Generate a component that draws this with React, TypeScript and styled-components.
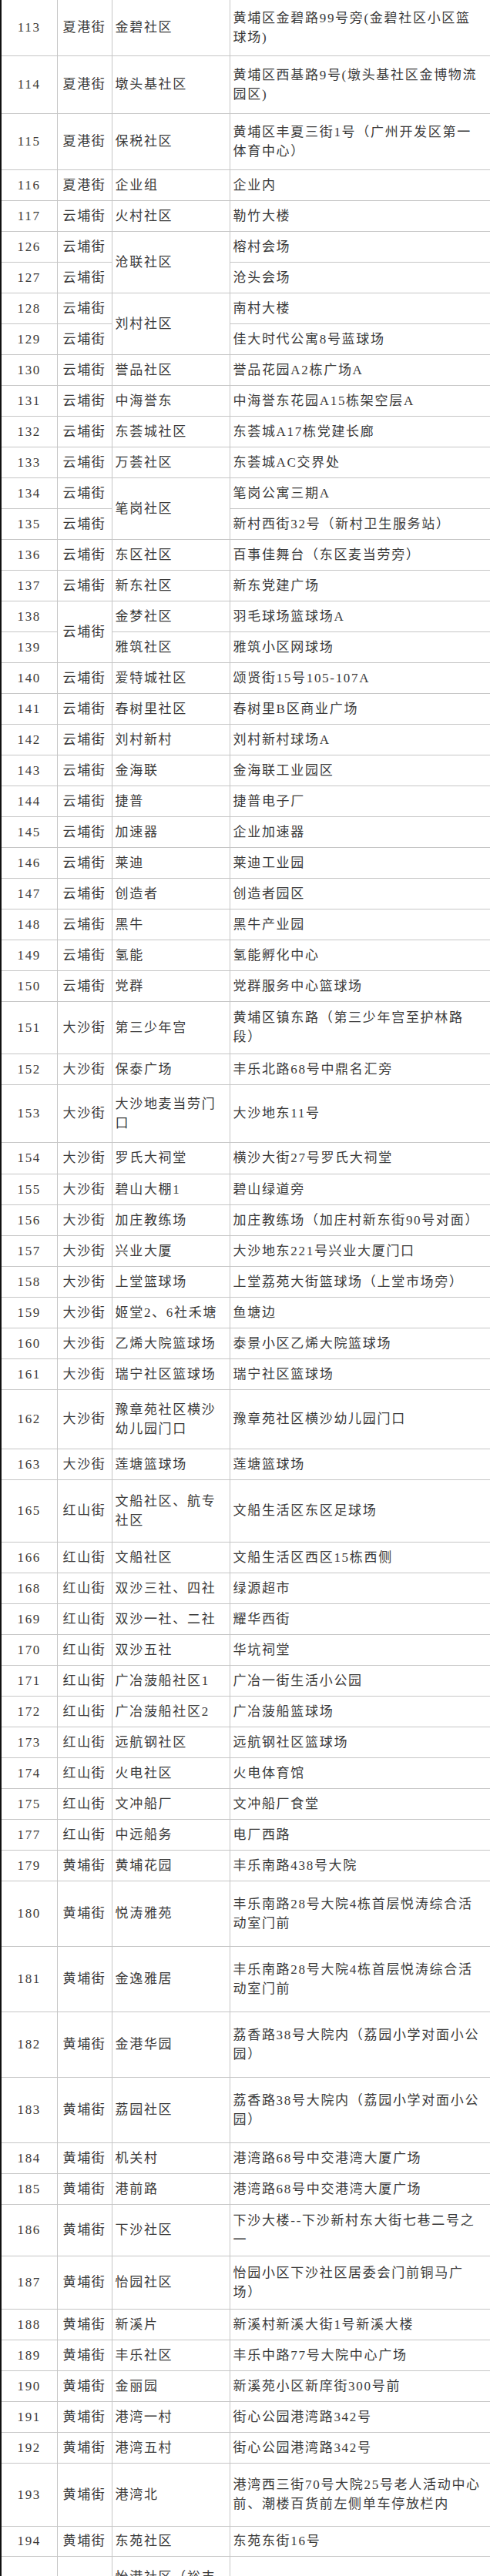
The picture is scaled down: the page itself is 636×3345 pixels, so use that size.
import React from "react";
import styled, { createGlobalStyle } from "styled-components";

const GlobalStyle = createGlobalStyle`
  html, body {
    margin: 0;
    padding: 0;
    background: #ffffff;
  }
`;

interface Row {
  n: number;
  s: string | null;
  ss?: number;
  c: string[] | null;
  cs?: number;
  a: string[];
  h?: number;
}

const rows: Row[] = [
  { n: 113, s: "夏港街", c: ["金碧社区"], a: ["黄埔区金碧路99号旁(金碧社区小区篮", "球场)"], h: 72 },
  { n: 114, s: "夏港街", c: ["墩头基社区"], a: ["黄埔区西基路9号(墩头基社区金博物流", "园区)"], h: 75 },
  { n: 115, s: "夏港街", c: ["保税社区"], a: ["黄埔区丰夏三街1号（广州开发区第一", "体育中心）"], h: 73 },
  { n: 116, s: "夏港街", c: ["企业组"], a: ["企业内"] },
  { n: 117, s: "云埔街", c: ["火村社区"], a: ["勒竹大楼"] },
  { n: 126, s: "云埔街", c: ["沧联社区"], cs: 2, a: ["榕村会场"] },
  { n: 127, s: "云埔街", c: null, a: ["沧头会场"] },
  { n: 128, s: "云埔街", c: ["刘村社区"], cs: 2, a: ["南村大楼"] },
  { n: 129, s: "云埔街", c: null, a: ["佳大时代公寓8号蓝球场"] },
  { n: 130, s: "云埔街", c: ["誉品社区"], a: ["誉品花园A2栋广场A"] },
  { n: 131, s: "云埔街", c: ["中海誉东"], a: ["中海誉东花园A15栋架空层A"] },
  { n: 132, s: "云埔街", c: ["东荟城社区"], a: ["东荟城A17栋党建长廊"] },
  { n: 133, s: "云埔街", c: ["万荟社区"], a: ["东荟城AC交界处"] },
  { n: 134, s: "云埔街", c: ["笔岗社区"], cs: 2, a: ["笔岗公寓三期A"] },
  { n: 135, s: "云埔街", c: null, a: ["新村西街32号（新村卫生服务站）"] },
  { n: 136, s: "云埔街", c: ["东区社区"], a: ["百事佳舞台（东区麦当劳旁）"] },
  { n: 137, s: "云埔街", c: ["新东社区"], a: ["新东党建广场"] },
  { n: 138, s: "云埔街", ss: 2, c: ["金梦社区"], a: ["羽毛球场篮球场A"] },
  { n: 139, s: null, c: ["雅筑社区"], a: ["雅筑小区网球场"] },
  { n: 140, s: "云埔街", c: ["爱特城社区"], a: ["颂贤街15号105-107A"] },
  { n: 141, s: "云埔街", c: ["春树里社区"], a: ["春树里B区商业广场"] },
  { n: 142, s: "云埔街", c: ["刘村新村"], a: ["刘村新村球场A"] },
  { n: 143, s: "云埔街", c: ["金海联"], a: ["金海联工业园区"] },
  { n: 144, s: "云埔街", c: ["捷普"], a: ["捷普电子厂"] },
  { n: 145, s: "云埔街", c: ["加速器"], a: ["企业加速器"] },
  { n: 146, s: "云埔街", c: ["莱迪"], a: ["莱迪工业园"] },
  { n: 147, s: "云埔街", c: ["创造者"], a: ["创造者园区"] },
  { n: 148, s: "云埔街", c: ["黑牛"], a: ["黑牛产业园"] },
  { n: 149, s: "云埔街", c: ["氢能"], a: ["氢能孵化中心"] },
  { n: 150, s: "云埔街", c: ["党群"], a: ["党群服务中心篮球场"] },
  { n: 151, s: "大沙街", c: ["第三少年宫"], a: ["黄埔区镇东路（第三少年宫至护林路", "段）"], h: 68 },
  { n: 152, s: "大沙街", c: ["保泰广场"], a: ["丰乐北路68号中鼎名汇旁"] },
  { n: 153, s: "大沙街", c: ["大沙地麦当劳门", "口"], a: ["大沙地东11号"], h: 75 },
  { n: 154, s: "大沙街", c: ["罗氏大祠堂"], a: ["横沙大街27号罗氏大祠堂"], h: 41 },
  { n: 155, s: "大沙街", c: ["碧山大棚1"], a: ["碧山绿道旁"] },
  { n: 156, s: "大沙街", c: ["加庄教练场"], a: ["加庄教练场（加庄村新东街90号对面）"] },
  { n: 157, s: "大沙街", c: ["兴业大厦"], a: ["大沙地东221号兴业大厦门口"] },
  { n: 158, s: "大沙街", c: ["上堂篮球场"], a: ["上堂荔苑大街篮球场（上堂市场旁）"] },
  { n: 159, s: "大沙街", c: ["姬堂2、6社禾塘"], a: ["鱼塘边"] },
  { n: 160, s: "大沙街", c: ["乙烯大院篮球场"], a: ["泰景小区乙烯大院篮球场"] },
  { n: 161, s: "大沙街", c: ["瑞宁社区篮球场"], a: ["瑞宁社区篮球场"] },
  { n: 162, s: "大沙街", c: ["豫章苑社区横沙", "幼儿园门口"], a: ["豫章苑社区横沙幼儿园门口"], h: 77 },
  { n: 163, s: "大沙街", c: ["莲塘篮球场"], a: ["莲塘篮球场"] },
  { n: 165, s: "红山街", c: ["文船社区、航专", "社区"], a: ["文船生活区东区足球场"], h: 81 },
  { n: 166, s: "红山街", c: ["文船社区"], a: ["文船生活区西区15栋西侧"] },
  { n: 168, s: "红山街", c: ["双沙三社、四社"], a: ["绿源超市"] },
  { n: 169, s: "红山街", c: ["双沙一社、二社"], a: ["耀华西街"] },
  { n: 170, s: "红山街", c: ["双沙五社"], a: ["华坑祠堂"] },
  { n: 171, s: "红山街", c: ["广冶菠船社区1"], a: ["广冶一街生活小公园"] },
  { n: 172, s: "红山街", c: ["广冶菠船社区2"], a: ["广冶菠船篮球场"] },
  { n: 173, s: "红山街", c: ["远航钢社区"], a: ["远航钢社区篮球场"] },
  { n: 174, s: "红山街", c: ["火电社区"], a: ["火电体育馆"] },
  { n: 175, s: "红山街", c: ["文冲船厂"], a: ["文冲船厂食堂"] },
  { n: 177, s: "红山街", c: ["中远船务"], a: ["电厂西路"] },
  { n: 179, s: "黄埔街", c: ["黄埔花园"], a: ["丰乐南路438号大院"] },
  { n: 180, s: "黄埔街", c: ["悦涛雅苑"], a: ["丰乐南路28号大院4栋首层悦涛综合活", "动室门前"], h: 85 },
  { n: 181, s: "黄埔街", c: ["金逸雅居"], a: ["丰乐南路28号大院4栋首层悦涛综合活", "动室门前"], h: 85 },
  { n: 182, s: "黄埔街", c: ["金港华园"], a: ["荔香路38号大院内（荔园小学对面小公", "园）"], h: 85 },
  { n: 183, s: "黄埔街", c: ["荔园社区"], a: ["荔香路38号大院内（荔园小学对面小公", "园）"], h: 85 },
  { n: 184, s: "黄埔街", c: ["机关村"], a: ["港湾路68号中交港湾大厦广场"] },
  { n: 185, s: "黄埔街", c: ["港前路"], a: ["港湾路68号中交港湾大厦广场"] },
  { n: 186, s: "黄埔街", c: ["下沙社区"], a: ["下沙大楼--下沙新村东大街七巷二号之", "一"], h: 67 },
  { n: 187, s: "黄埔街", c: ["怡园社区"], a: ["怡园小区下沙社区居委会门前铜马广", "场）"], h: 69 },
  { n: 188, s: "黄埔街", c: ["新溪片"], a: ["新溪村新溪大街1号新溪大楼"] },
  { n: 189, s: "黄埔街", c: ["丰乐社区"], a: ["丰乐中路77号大院中心广场"] },
  { n: 190, s: "黄埔街", c: ["金丽园"], a: ["新溪苑小区新庠街300号前"] },
  { n: 191, s: "黄埔街", c: ["港湾一村"], a: ["街心公园港湾路342号"] },
  { n: 192, s: "黄埔街", c: ["港湾五村"], a: ["街心公园港湾路342号"] },
  { n: 193, s: "黄埔街", c: ["港湾北"], a: ["港湾西三街70号大院25号老人活动中心", "前、潮楼百货前左侧单车停放栏内"], h: 82 },
  { n: 194, s: "黄埔街", c: ["东苑社区"], a: ["东苑东街16号"], h: 39 },
  { n: 195, s: "黄埔街", c: ["怡港社区（裕丰", "园）"], a: ["裕丰园小区篮球场"], h: 80 },
];

const lines = (arr: string[]) =>
  arr.map((l, i) => (
    <React.Fragment key={i}>
      {i > 0 && <br />}
      {l}
    </React.Fragment>
  ));

export default function App() {
  return (
    <Page>
      <GlobalStyle />
      <Table>
        <colgroup>
          <Col $w={73} />
          <Col $w={71} />
          <Col $w={153} />
          <Col $w={338} />
        </colgroup>
        <tbody>
          {rows.map((r) => (
            <Tr key={r.n} $h={r.h ?? 40}>
              <NumCell>{r.n}</NumCell>
              {r.s !== null && <StreetCell rowSpan={r.ss}>{r.s}</StreetCell>}
              {r.c !== null && <TextCell rowSpan={r.cs}>{lines(r.c)}</TextCell>}
              <TextCell>{lines(r.a)}</TextCell>
            </Tr>
          ))}
        </tbody>
      </Table>
    </Page>
  );
}

const Page = styled.div`
  width: 636px;
  height: 3345px;
  overflow: hidden;
  background: #ffffff;
`;

const Table = styled.table`
  border-collapse: collapse;
  table-layout: fixed;
  width: 635px;
  border-left: 2px solid #111111;
  font-family: "Liberation Serif", "Noto Sans CJK SC", serif;
  font-size: 17px;
  letter-spacing: 1.7px;
  color: #3a3a3a;

  tr:first-child td {
    border-top: none;
  }
`;

const Col = styled.col<{ $w: number }>`
  width: ${(p) => p.$w}px;
`;

const Tr = styled.tr<{ $h: number }>`
  height: ${(p) => p.$h}px;
`;

const Cell = styled.td`
  border: 1px solid #c6c6c6;
  vertical-align: middle;
  white-space: nowrap;
  overflow: hidden;
  line-height: 25px;
  padding: 0 0 0 4px;
`;

const NumCell = styled(Cell)`
  text-align: center;
  padding: 0;
  border-left: 2px solid #111111;
`;

const StreetCell = styled(Cell)`
  text-align: center;
  padding: 0;
`;

const TextCell = styled(Cell)`
  text-align: left;
`;
